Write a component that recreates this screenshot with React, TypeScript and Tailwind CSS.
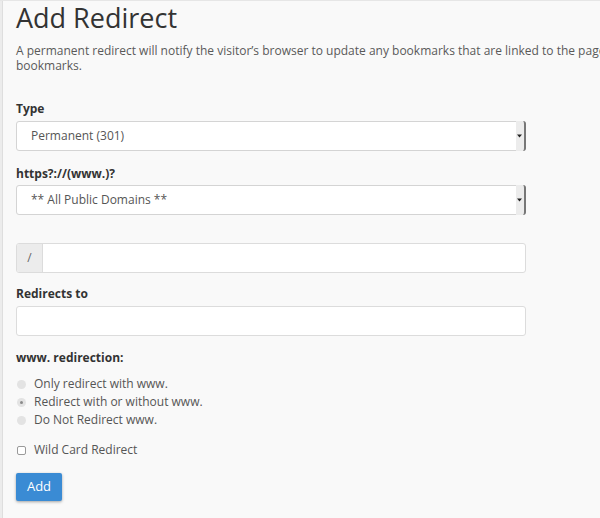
import React from "react";

function SelectBox({ value }: { value: string }) {
  return (
    <div className="relative flex h-[30px] w-[510px] items-center rounded-[3px] border border-[#d4d4d4] bg-white pl-[14px] text-[12px] text-[#555]">
      <span>{value}</span>
      <div className="absolute right-[-1px] top-[-1px] bottom-[-1px] flex w-[10px] items-center justify-center rounded-r-[3px] border-r-2 border-[#777] bg-[#ececec]">
        <svg width="5" height="4" viewBox="0 0 5 4" className="ml-[-1px]">
          <path d="M0 0.5 L5 0.5 L2.5 3.5 Z" fill="#222" />
        </svg>
      </div>
    </div>
  );
}

function Radio({ label, checked }: { label: string; checked?: boolean }) {
  return (
    <div className="flex h-[18px] items-center">
      <span className="ml-[1px] flex h-[9px] w-[9px] items-center justify-center rounded-full bg-[#e3e3e3]">
        {checked && <span className="h-[3px] w-[3px] rounded-full bg-[#8a8a8a]" />}
      </span>
      <span className="ml-[8px] text-[12px] text-[#555]">{label}</span>
    </div>
  );
}

export default function App() {
  return (
    <div
      className="min-h-[518px] w-[600px] overflow-hidden border-t border-[#e6e6e6] bg-[#f9f9f9]"
      style={{ fontFamily: '"Open Sans", "Noto Sans", sans-serif' }}
    >
      <div className="flex min-h-[517px]">
        <div className="w-[2px] shrink-0 bg-[#ececec]" />
        <div className="w-[1px] shrink-0 bg-[#dedede]" />
        <div className="min-w-0 flex-1 overflow-hidden pl-[13px] pt-[2px]">
          <h1 className="text-[27px] font-normal leading-[30px] text-[#333]">Add Redirect</h1>
          <p className="mt-[10px] text-[12px] leading-[15px] text-[#595959]">
            <span className="block whitespace-nowrap">
              A permanent redirect will notify the visitor’s browser to update any bookmarks that are linked to the page that is being redirected. Temporary redirects will not update the visitor’s
            </span>
            <span className="block">bookmarks.</span>
          </p>

          <div className="mt-[27px] text-[12px] font-bold leading-[17px] text-[#333]">Type</div>
          <div className="mt-[4px]">
            <SelectBox value="Permanent (301)" />
          </div>

          <div className="mt-[14px] text-[12px] font-bold leading-[17px] text-[#333]">https?://(www.)?</div>
          <div className="mt-[3px]">
            <SelectBox value="** All Public Domains **" />
          </div>

          <div className="mt-[28px] flex h-[30px] w-[510px] overflow-hidden rounded-[3px] border border-[#dcdcdc] bg-white">
            <div className="flex w-[26px] items-center justify-center border-r border-[#dcdcdc] bg-[#ececec] text-[12px] text-[#666]">
              /
            </div>
            <div className="flex-1" />
          </div>

          <div className="mt-[12px] text-[12px] font-bold leading-[17px] text-[#333]">Redirects to</div>
          <div className="mt-[4px] h-[30px] w-[510px] rounded-[3px] border border-[#dcdcdc] bg-white" />

          <div className="mt-[13px] text-[12px] font-bold leading-[17px] text-[#333]">www. redirection:</div>
          <div className="mt-[9px] flex flex-col">
            <Radio label="Only redirect with www." />
            <Radio label="Redirect with or without www." checked />
            <Radio label="Do Not Redirect www." />
          </div>

          <div className="mt-[12px] flex h-[18px] items-center">
            <span className="ml-[1px] h-[9px] w-[9px] rounded-[2px] border border-[#9a9a9a] bg-white" />
            <span className="ml-[8px] text-[12px] text-[#555]">Wild Card Redirect</span>
          </div>

          <button className="mt-[14px] h-[28px] w-[46px] rounded-[2px] bg-[#3a8bd4] text-[13px] text-white shadow-[0_1px_3px_rgba(0,0,0,0.35)]">
            Add
          </button>
        </div>
      </div>
    </div>
  );
}
